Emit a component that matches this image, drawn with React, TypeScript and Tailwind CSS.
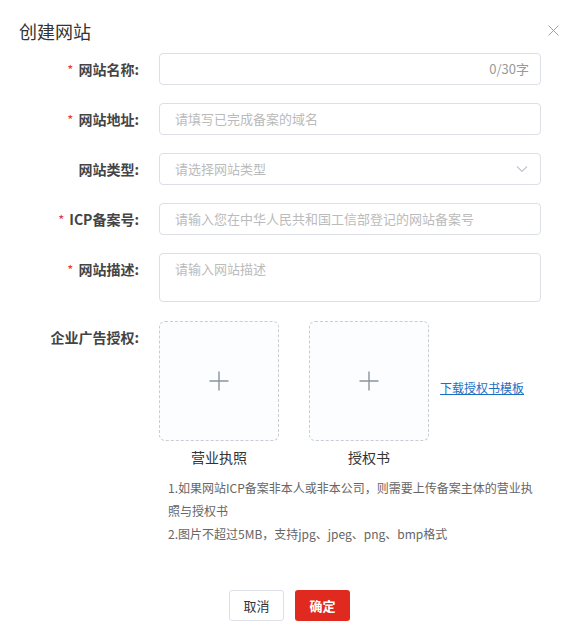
import React from "react";

const font = { fontFamily: '"Noto Sans CJK SC", "Noto Sans", sans-serif' };

function Label({ text, required }: { text: string; required?: boolean }) {
  return (
    <div className="w-[139px] shrink-0 text-right text-[14px] leading-[22px] font-bold text-[#444]">
      {required && <span className="text-[#e4393c] font-normal text-[13px] mr-[5px]">*</span>}
      {text}
    </div>
  );
}

function Upload({ caption }: { caption: string }) {
  return (
    <div className="flex flex-col items-center">
      <div className="w-[120px] h-[120px] rounded-[6px] border border-dashed border-[#c9ccd3] bg-[#fbfdff] flex items-center justify-center">
        <svg width="22" height="22" viewBox="0 0 22 22">
          <path d="M11 1.5V20.5M1.5 11H20.5" stroke="#8c939d" strokeWidth="1.4" />
        </svg>
      </div>
      <div className="mt-[6px] text-[14px] leading-[20px] text-[#333]">{caption}</div>
    </div>
  );
}

export default function App() {
  return (
    <div className="w-[579px] h-[641px] bg-white" style={font}>
      <div className="flex items-start justify-between pt-[20px] pl-[19px] pr-[20px]">
        <div className="text-[18px] leading-[22px] text-[#333]">创建网站</div>
        <svg width="11" height="11" viewBox="0 0 11 11" className="mt-[5px]">
          <path d="M0.5 0.5L10.5 10.5M10.5 0.5L0.5 10.5" stroke="#a0a0a0" strokeWidth="1" />
        </svg>
      </div>

      <div className="mt-[11px] flex flex-col">
        <div className="flex items-center">
          <Label text="网站名称:" required />
          <div className="ml-[20px] w-[382px] h-[32px] border border-[#dcdfe6] rounded-[4px] flex items-center justify-end pr-[11px] text-[13px] text-[#999]">
            0/30字
          </div>
        </div>

        <div className="flex items-center mt-[18px]">
          <Label text="网站地址:" required />
          <div className="ml-[20px] w-[382px] h-[32px] border border-[#dcdfe6] rounded-[4px] flex items-center pl-[15px] text-[13px] text-[#bbb]">
            请填写已完成备案的域名
          </div>
        </div>

        <div className="flex items-center mt-[18px]">
          <Label text="网站类型:" />
          <div className="ml-[20px] w-[382px] h-[32px] border border-[#dcdfe6] rounded-[4px] flex items-center justify-between pl-[15px] pr-[12px] text-[13px] text-[#bbb]">
            <span>请选择网站类型</span>
            <svg width="12" height="8" viewBox="0 0 12 8">
              <path d="M1 1.5L6 6.5L11 1.5" fill="none" stroke="#c0c4cc" strokeWidth="1.1" />
            </svg>
          </div>
        </div>

        <div className="flex items-center mt-[18px]">
          <Label text="ICP备案号:" required />
          <div className="ml-[20px] w-[382px] h-[32px] border border-[#dcdfe6] rounded-[4px] flex items-center pl-[15px] text-[13px] text-[#bbb]">
            请输入您在中华人民共和国工信部登记的网站备案号
          </div>
        </div>

        <div className="flex items-start mt-[18px]">
          <div className="pt-[5px]">
            <Label text="网站描述:" required />
          </div>
          <div className="ml-[20px] w-[382px] h-[49px] border border-[#dcdfe6] rounded-[4px] pl-[15px] pt-[5px] text-[13px] leading-[20px] text-[#bbb]">
            请输入网站描述
          </div>
        </div>

        <div className="flex items-start mt-[19px]">
          <div className="pt-[5px]">
            <Label text="企业广告授权:" />
          </div>
          <div className="ml-[20px] flex flex-col">
            <div className="flex items-start">
              <Upload caption="营业执照" />
              <div className="ml-[30px]">
                <Upload caption="授权书" />
              </div>
              <a className="ml-[11px] mt-[58px] text-[12px] leading-[18px] text-[#1a6fc4] underline">
                下载授权书模板
              </a>
            </div>
            <div className="mt-[9px] ml-[9px] w-[372px] text-[12px] leading-[23px] text-[#666]">
              <div>1.如果网站ICP备案非本人或非本公司，则需要上传备案主体的营业执照与授权书</div>
              <div>2.图片不超过5MB，支持jpg、jpeg、png、bmp格式</div>
            </div>
          </div>
        </div>

        <div className="flex justify-center gap-[11px] mt-[45px]">
          <button className="w-[55px] h-[31px] border border-[#dcdfe6] rounded-[3px] bg-white text-[13px] text-[#333]">
            取消
          </button>
          <button className="w-[55px] h-[31px] rounded-[3px] bg-[#e02a20] text-[13px] font-bold text-white">
            确定
          </button>
        </div>
      </div>
    </div>
  );
}
